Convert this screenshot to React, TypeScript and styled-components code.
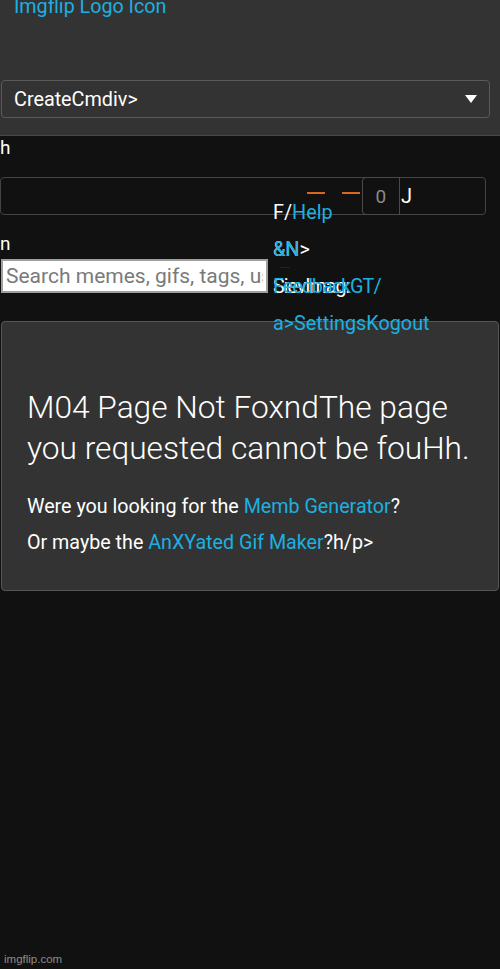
import React from "react";
import styled, { createGlobalStyle } from "styled-components";

const Global = createGlobalStyle`
  html, body { margin: 0; padding: 0; background: #111111; }
  body { font-family: Roboto, "Liberation Sans", sans-serif; color: #ffffff; }
  * { box-sizing: border-box; }
`;

const Page = styled.div`
  position: relative;
  min-height: 969px;
  display: flex;
  flex-direction: column;
  background: #111111;
  overflow: hidden;
`;

const Header = styled.header`
  height: 136px;
  background: #333333;
  border-bottom: 1px solid #484848;
  display: flex;
  flex-direction: column;
`;

const LogoLink = styled.a`
  margin: -4px 0 0 14px;
  font-size: 19.7px;
  line-height: 22px;
  color: #1cb0e0;
  text-decoration: none;
`;

const SelectBox = styled.div`
  margin: 62px 0 0 1px;
  width: 489px;
  height: 38px;
  border: 1px solid #5a5a5a;
  border-radius: 4px;
  display: flex;
  align-items: center;
  justify-content: space-between;
  padding: 0 12px 0 12px;
  font-size: 19.8px;
  color: #ffffff;
`;

const Caret = styled.span`
  width: 0;
  height: 0;
  border-left: 6px solid transparent;
  border-right: 6px solid transparent;
  border-top: 8px solid #ffffff;
`;

const Body = styled.main`
  display: flex;
  flex-direction: column;
`;

const Stray = styled.div<{ $mt: number }>`
  margin-top: ${(p) => p.$mt}px;
  font-size: 19px;
  line-height: 20px;
  color: #ffffff;
`;

const Field = styled.div`
  margin-top: 19px;
  width: 486px;
  height: 38px;
  border: 1px solid #444444;
  border-radius: 4px;
  display: flex;
  align-items: stretch;
  padding-right: 73px;
`;

const Spacer = styled.div`
  flex: 1;
`;

const Dash = styled.span<{ $ml: number }>`
  align-self: center;
  margin: -6px 0 0 ${(p) => p.$ml}px;
  width: 18px;
  height: 2px;
  background: #d8681c;
`;

const CountBox = styled.div`
  margin: -1px 0 -1px 2px;
  width: 38px;
  border: 1px solid #4a4a4a;
  border-radius: 4px 0 0 4px;
  display: flex;
  align-items: center;
  justify-content: center;
  font-size: 19px;
  color: #8a8a8a;
`;

const JChar = styled.span`
  align-self: center;
  margin-left: 1px;
  font-size: 20px;
  color: #ffffff;
`;

const SearchInput = styled.input`
  margin: 5px 0 0 1px;
  width: 267px;
  height: 34px;
  border: 2px solid #a0a0a0;
  background: #ffffff;
  padding: 0 3px;
  font-family: Roboto, "Liberation Sans", sans-serif;
  font-size: 21px;
  color: #333;
  outline: none;
  &::placeholder { color: #7a7a7a; }
`;

const Card = styled.section`
  margin: 28px 0 0 1px;
  width: 498px;
  background: #333333;
  border: 1px solid #555555;
  border-radius: 4px;
  padding: 65px 25px 35px 25px;
`;

const Title = styled.h1`
  margin: 0;
  font-size: 31.7px;
  font-weight: 300;
  line-height: 41px;
  color: #ffffff;
`;

const Para = styled.p<{ $mt: number }>`
  margin: ${(p) => p.$mt}px 0 0 0;
  font-size: 19.7px;
  line-height: 24px;
  color: #ffffff;
`;

const Link = styled.a`
  color: #1cb0e0;
  text-decoration: none;
`;

const Footer = styled.footer`
  margin-top: auto;
  padding: 0 0 3px 4px;
  font-family: "Liberation Sans", Arial, sans-serif;
  font-size: 11.5px;
  line-height: 14px;
  color: #8c8c8c;
`;

const Menu = styled.nav`
  position: absolute;
  left: 273px;
  top: 194px;
  display: flex;
  flex-direction: column;
  font-size: 19.8px;
  line-height: 37px;
  white-space: nowrap;
`;

const MenuLine = styled.div<{ $tight?: boolean }>`
  position: relative;
  height: 37px;
  color: #ffffff;
  letter-spacing: ${(p) => (p.$tight ? "-1px" : "normal")};
`;

const Overlay = styled.span`
  position: absolute;
  left: 0;
  top: 0;
  color: #1cb0e0;
`;

const RedTick = styled.span`
  position: absolute;
  left: 7px;
  top: 36px;
  width: 10px;
  height: 1px;
  background: #4a1208;
`;

export default function App() {
  return (
    <Page>
      <Global />
      <Header>
        <LogoLink href="#">Imgflip Logo Icon</LogoLink>
        <SelectBox>
          <span>CreateCmdiv&gt;</span>
          <Caret />
        </SelectBox>
      </Header>
      <Body>
        <Stray $mt={2}>h</Stray>
        <Field>
          <Spacer />
          <Dash $ml={0} />
          <Dash $ml={17} />
          <CountBox>0</CountBox>
          <JChar>J</JChar>
        </Field>
        <Stray $mt={19}>n</Stray>
        <SearchInput placeholder="Search memes, gifs, tags, users" />
        <Card>
          <Title>M04 Page Not FoxndThe page you requested cannot be fouHh.</Title>
          <Para $mt={26}>
            Were you looking for the <Link href="#">Memb Generator</Link>?
          </Para>
          <Para $mt={12}>
            Or maybe the <Link href="#">AnXYated Gif Maker</Link>?h/p&gt;
          </Para>
        </Card>
      </Body>
      <Footer>imgflip.com</Footer>
      <Menu>
        <MenuLine>
          F/<Link href="#">Help</Link>
        </MenuLine>
        <MenuLine>
          &amp;N&gt;
          <Overlay>&amp;N</Overlay>
          <RedTick />
        </MenuLine>
        <MenuLine $tight>
          Sievlmag:
          <Overlay>FeedbackGT/</Overlay>
        </MenuLine>
        <MenuLine>
          <Link href="#">a&gt;SettingsKogout</Link>
        </MenuLine>
      </Menu>
    </Page>
  );
}
